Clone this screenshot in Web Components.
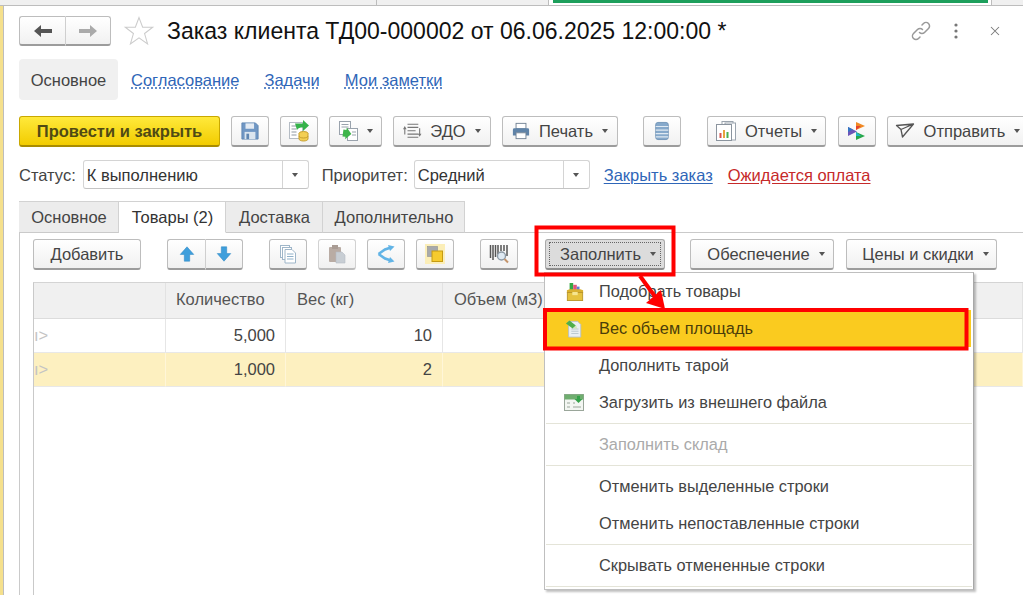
<!doctype html>
<html lang="ru">
<head>
<meta charset="utf-8">
<title>Заказ клиента</title>
<style>
	html, body { margin: 0; height: 100%; overflow: hidden; background: #fff; }
	body { font: 16.5px "Liberation Sans", Arial, sans-serif; color: #444; }
</style>
</head>
<body>
<order-window></order-window>
<script>
const ICONS = {
	back: '<path d="M1 10l7-6v4h11v4H8v4z" fill="#555"/>',
	forward: '<path d="M19 10l-7-6v4H1v4h11v4z" fill="#aaa"/>',
	star: '<path d="M14 1.5l3.4 9h9.4l-7.6 5.9 2.8 9.6-8-5.6-8 5.6 2.8-9.6-7.6-5.9h9.4z" fill="#fff" stroke="#ccc" stroke-width="1"/>',
	link: '<g fill="none" stroke="#999" stroke-width="1.5" stroke-linecap="round"><path d="M8.5 11.5a3.5 3.5 0 0 0 5 0l4-4a3.5 3.5 0 0 0-5-5l-1.500 1.500"/><path d="M11.500 8.500a3.500 3.500 0 0 0-5 0l-4 4a3.500 3.500 0 0 0 5 5l1.500-1.500"/></g>',
	kebab: '<g fill="#777"><circle cx="10" cy="4" r="1.600"/><circle cx="10" cy="10" r="1.600"/><circle cx="10" cy="16" r="1.600"/></g>',
	close: '<path d="M5 5l10 10M15 5L5 15" stroke="#777" stroke-width="1.300"/>',
	save: '<path d="M1 1h15l3 3v15H1z" fill="#7097c4" stroke="#5f86b2"/><rect x="5" y="1.500" width="9.500" height="6" fill="#e4ebf3"/><rect x="4" y="11" width="12" height="8" fill="#dbe5ef"/><rect x="6" y="13" width="3" height="6" fill="#5f86b2"/>',
	post: '<rect x=".5" y="1.500" width="13" height="16" fill="#fff" stroke="#b5bcc4"/><path d="M2.500 5h5M2.500 8h5M2.500 11h5M2.500 14h5" stroke="#8f99a3"/><path d="M6 2.500h8V-1l6 5.500-6 5.500V6.500c-3 0-5 .5-6 2.500z" fill="#35b24a"/><ellipse cx="14.500" cy="12.500" rx="4.500" ry="2" fill="#f3cf55" stroke="#c79f2e"/><path d="M10 12.500V18c0 1.100 2 2 4.500 2s4.500-.9 4.500-2v-5.500" fill="#f3cf55" stroke="#c79f2e"/><path d="M10 15c0 1.100 2 2 4.500 2s4.500-.9 4.500-2" fill="none" stroke="#c79f2e"/>',
	related: '<rect x="1.500" y=".5" width="11" height="13" fill="#fff" stroke="#9aa3ad"/><path d="M3.500 3.500h7M3.500 6h7" stroke="#9aa3ad"/><rect x="9.500" y="7.500" width="10" height="12" fill="#fff" stroke="#9aa3ad"/><path d="M14 11h4M14 14h4" stroke="#9aa3ad"/><path d="M5 9h3V6.500l5.500 6-5.500 6V16H5z" fill="#3fb54a" transform="rotate(8 9 12)"/>',
	edo: '<g fill="none" stroke="#777" stroke-width="1.200"><path d="M5 2.500h12M5 6h12M5 13.500h12M5 17h12M5 9.800h9"/><path d="M2 7v7M18.500 7v7"/></g><path d="M2 4.500L0 8h4zM18.500 16.500L16.500 13h4z" fill="#777"/>',
	print: '<rect x="4.500" y="1.500" width="11" height="6" fill="#fff" stroke="#6f7f91"/><path d="M1 8.500a1.500 1.500 0 0 1 1.500-1.500h15a1.500 1.500 0 0 1 1.500 1.500V15h-3.500v-3h-11v3H1z" fill="#5f83a8"/><rect x="4.500" y="12" width="11" height="6.500" fill="#fff" stroke="#6f7f91"/>',
	stack: '<rect x="3" y=".5" width="14" height="19" rx="2.500" fill="#86a9cb" stroke="#6f93b6"/><path d="M3 5h14M3 9h14M3 13h14M3 16.500h14" stroke="#dfe9f2" stroke-width="1.300"/>',
	reports: '<rect x="6" y=".5" width="11" height="16" fill="#fff" stroke="#9aa3ad"/><rect x="9" y="2" width="10.500" height="17" fill="#fff" stroke="#9aa3ad"/><rect x=".5" y="3.500" width="15" height="16" fill="#fff" stroke="#8b949e"/><rect x="3.500" y="12" width="2" height="5" fill="#d9534f"/><rect x="7" y="9" width="2" height="8" fill="#e8a33d"/><rect x="10.500" y="11" width="2" height="6" fill="#4caf50"/>',
	bitrix: '<path d="M9 1l9 4-9 4z" fill="#f08a24"/><path d="M9 5h5l-5 4z" fill="#e5412d"/><path d="M1 6l9 4.500-9 4.500z" fill="#6c56b8"/><path d="M1 6l5 2.500-5 2.500z" fill="#3276c3"/><path d="M9 11l9 4-9 4z" fill="#27a84a"/><path d="M9 11l5 4H9z" fill="#1fb5c9"/>',
	send: '<path d="M1.500 4.500l17-1.500-11 13-1.500-7.500zM6 8.500l12.500-5.500" fill="none" stroke="#555" stroke-width="1.300" stroke-linejoin="round"/>',
	up: '<path d="M10 2l7.500 8.500H13V18H7v-7.500H2.500z" fill="#3f9fdc" stroke="#2f88c4" stroke-width=".6"/>',
	down: '<path d="M10 18l7.500-8.500H13V2H7v7.500H2.500z" fill="#3f9fdc" stroke="#2f88c4" stroke-width=".6"/>',
	copy: '<g fill="#fff" stroke="#9fb6c9"><rect x="2.500" y="1.500" width="9" height="12"/><rect x="4.500" y="3.500" width="9" height="12"/><path d="M7 5.500h7l3.500 3.500v10H7z"/></g><path d="M9 10h6.500M9 12.500h6.500M9 15h6.500" stroke="#8fb0c9"/>',
	paste: '<rect x="2" y="3" width="12" height="15" rx="1" fill="#b9aca4"/><rect x="5" y="1" width="6" height="4" fill="#a99c94"/><path d="M9 8h6l3 3v8H9z" fill="#c8ced4" stroke="#b5bcc4" stroke-width=".6"/>',
	merge: '<path d="M2.500 10L9 5.500l6-2M2.500 10L9 14.500l6 2" fill="none" stroke="#62b4e6" stroke-width="2.600"/><path d="M12 1l6.500 1.500-4.500 4.500zM12 19l6.500-1.500L14 13z" fill="#62b4e6"/>',
	layers: '<rect width="20" height="20" fill="#fbeeb8"/><rect x="2.500" y="2.500" width="10" height="10" fill="#a7a9ac" stroke="#8e9093" stroke-width=".6"/><rect x="7" y="7" width="10.500" height="10.500" fill="#f6cb2e" stroke="#c59b12"/>',
	barcode: '<path d="M1.500 1v13M4 1v15M6.500 1v12M9 1v9M12 1v6M15 1v6M18 1v11" stroke="#555" stroke-width="1.500"/><circle cx="12.500" cy="12" r="4" fill="#dfeaf3" stroke="#8c9aa6" stroke-width="1.400"/><path d="M15.500 15l3.500 3.500" stroke="#c4946b" stroke-width="2"/>',
	pick: '<path d="M4 0h4v8H4z" fill="#35a845"/><path d="M8 2h4v7H8z" fill="#e2557b"/><path d="M12 4h3v6h-3z" fill="#5b7fd0"/><path d="M1 8l3-1h12l3 1v3H1z" fill="#d9b030"/><rect x="1.500" y="10.500" width="17" height="9" fill="#e6c23e" stroke="#b8952a"/><rect x="7" y="10" width="6" height="3.500" fill="#f6e58f"/>',
	weight: '<path d="M4 1.500h10l3.500 3.500v14H4z" fill="#e9eff3" stroke="#b5bfc7"/><path d="M7 10h8M7 12.500h8M7 15h8" stroke="#b7c5cf"/><path d="M1 4l4-3.500 7 5.500-3.500 3.500z" fill="#4fae4a"/><path d="M9 9l3.500-3 1 4z" fill="#cfe6b8"/>',
	load: '<rect x=".5" y="1.500" width="19" height="16" fill="#f3f6f2" stroke="#9aa69a"/><rect x=".5" y="1.500" width="19" height="5" fill="#6fae6f"/><path d="M3 10h3M3 14h3M9 14h8M9 10h2" stroke="#9aa69a"/><path d="M13 3h3v3h2.500l-4 4-4-4H13z" fill="#35a24a"/>'
};

class UiIcon extends HTMLElement {
	connectedCallback() {
		const size = this.getAttribute('size') || 20;
		const box = this.getAttribute('box') || 20;
		this.attachShadow({ mode: 'open' });
		this.shadowRoot.innerHTML = `
			<style>
				:host { display: inline-flex; flex: none; }
				svg { display: block; overflow: visible; }
			</style>
			<svg width="${size}" height="${size}" viewBox="0 0 ${box} ${box}">${ICONS[this.getAttribute('name')] || ''}</svg>
		`;
	}
}

class UiButton extends HTMLElement {
	constructor() {
		super();
		this.attachShadow({ mode: 'open' });
		this.shadowRoot.innerHTML = `
			<style>
				:host {
					display: inline-flex;
					flex: none;
					box-sizing: border-box;
					height: 31px;
					align-items: center;
					justify-content: center;
					gap: 9px;
					position: relative;
					background: linear-gradient(#ffffff, #f1f1f1);
					border: 1px solid #bdbdbd;
					border-bottom: 2px solid #9c9c9c;
					border-radius: 3px;
					color: #444;
					white-space: nowrap;
				}
				:host([primary]) {
					background: linear-gradient(#ffe93b, #f2cc00);
					border-color: #c9a800;
					border-bottom-color: #a98c00;
					color: #504a14;
					font-weight: bold;
				}
				:host([pressed]) {
					background: #dcdcdc;
					border-color: #a9a9a9;
					border-bottom-color: #8d8d8d;
				}
				:host([pressed])::after {
					content: "";
					position: absolute;
					inset: 2px 3px 2px 3px;
					border: 1px dotted #666;
				}
				:host([disabled]) { border-color: #d2d2d2; border-bottom-color: #bcbcbc; }
				:host([joined="left"]) { border-radius: 3px 0 0 3px; border-right-color: #cfcfcf; }
				:host([joined="right"]) { border-radius: 0 3px 3px 0; border-left: 0; }
				.caret {
					display: none;
					width: 0;
					height: 0;
					border: 3.5px solid transparent;
					border-top: 4px solid #555;
					border-bottom: 0;
				}
				:host([caret]) .caret { display: block; }
			</style>
			<slot></slot>
			<span class="caret"></span>
		`;
	}
}

class UiLink extends HTMLElement {
	constructor() {
		super();
		this.attachShadow({ mode: 'open' });
		this.shadowRoot.innerHTML = `
			<style>
				:host { display: inline-block; color: #2f66b8; text-decoration: underline; text-underline-offset: 2px; white-space: nowrap; }
				:host([dotted]) { text-decoration-style: dotted; }
				:host([danger]) { color: #c62a2a; }
			</style>
			<slot></slot>
		`;
	}
}

class UiCombo extends HTMLElement {
	constructor() {
		super();
		this.attachShadow({ mode: 'open' });
		this.shadowRoot.innerHTML = `
			<style>
				:host {
					display: inline-flex;
					flex: none;
					box-sizing: border-box;
					height: 29px;
					background: #fff;
					border: 1px solid #d4d4d4;
					border-bottom-color: #c4c4c4;
					border-radius: 3px;
					color: #333;
				}
				.value { flex: 1; padding-left: 3px; line-height: 29px; white-space: nowrap; overflow: hidden; }
				.arrow { flex: none; width: 25px; border-left: 1px solid #d4d4d4; display: grid; place-items: center; }
				.arrow i { width: 0; height: 0; border: 3.5px solid transparent; border-top: 4px solid #555; border-bottom: 0; }
			</style>
			<div class="value"><slot></slot></div>
			<div class="arrow"><i></i></div>
		`;
	}
}

class TabStrip extends HTMLElement {
	connectedCallback() {
		const active = Number(this.getAttribute('active') || 0);
		const labels = this.getAttribute('labels').split('|');
		const widths = this.getAttribute('widths').split('|');
		this.attachShadow({ mode: 'open' });
		this.shadowRoot.innerHTML = `
			<style>
				:host { display: flex; height: 31px; position: relative; z-index: 1; }
				div {
					box-sizing: border-box;
					height: 32px;
					padding-left: 1px;
					line-height: 30px;
					text-align: center;
					background: #ececec;
					border: 1px solid #d2d2d2;
					border-left: 0;
					border-bottom-color: #cacaca;
					white-space: nowrap;
				}
				div:first-child { border-left: 1px solid #d2d2d2; }
				.on { background: #fff; border-bottom-color: #fff; color: #333; }
			</style>
			${labels.map((label, i) => `<div class="${i === active ? 'on' : ''}" style="width:${widths[i]}px">${label}</div>`).join('')}
		`;
	}
}

class DataTable extends HTMLElement {
	constructor() {
		super();
		this.attachShadow({ mode: 'open' });
		this.shadowRoot.innerHTML = `
			<style>
				:host {
					display: block;
					border-left: 1px solid #c9c9c9;
					border-top: 1px solid #d4d4d4;
					background: #fff;
					height: 313px;
				}
				.row { display: grid; grid-template-columns: 132px 120px 157px 1fr; }
				.row > div { box-sizing: border-box; border-right: 1px solid #e6e6e6; overflow: hidden; white-space: nowrap; }
				.head > div { height: 36px; line-height: 33px; background: #f0f0f0; border-right-color: #e2e2e2; border-bottom: 1px solid #dcdcdc; padding-left: 10px; color: #555; }
				.head > div:nth-child(n+3) { padding-left: 11px; }
				.body > div { height: 34px; line-height: 32px; border-bottom: 1px solid #e8e8e8; padding-right: 10px; text-align: right; color: #444; }
				.body > div:first-child { text-align: left; padding: 0; color: #c4c4c4; }
				.sel > div { background: #fdf0c0; border-right-color: #fff6d8; }
			</style>
			<div class="row head"><div></div><div>Количество</div><div>Вес (кг)</div><div>Объем (м3)</div></div>
			<div class="row body"><div>ı&gt;</div><div>5,000</div><div>10</div><div></div></div>
			<div class="row body sel"><div>ı&gt;</div><div>1,000</div><div>2</div><div></div></div>
		`;
	}
}

class PopupMenu extends HTMLElement {
	constructor() {
		super();
		this.attachShadow({ mode: 'open' });
		this.shadowRoot.innerHTML = `
			<style>
				:host {
					display: block;
					position: absolute;
					z-index: 5;
					left: 544px;
					top: 272px;
					width: 430px;
					box-sizing: border-box;
					background: #fff;
					border: 1px solid #bfbfbf;
					border-right-color: #a8a8a8;
					box-shadow: 2px 2px 2px rgba(0, 0, 0, .25);
					font-size: 16.350px;
				}
			</style>
			<slot></slot>
		`;
	}
}

class MenuItem extends HTMLElement {
	constructor() {
		super();
		this.attachShadow({ mode: 'open' });
		this.shadowRoot.innerHTML = `
			<style>
				:host { display: flex; align-items: center; height: 37px; color: #444; white-space: nowrap; }
				:host([active]) { background: #facb1f; margin-right: 2px; color: #4a3d0a; }
				:host([disabled]) { color: #aaa; }
				.icon { flex: none; width: 54px; display: flex; padding-left: 19px; box-sizing: border-box; }
			</style>
			<div class="icon"><slot name="icon"></slot></div>
			<slot></slot>
		`;
	}
}

class MenuSeparator extends HTMLElement {
	constructor() {
		super();
		this.attachShadow({ mode: 'open' });
		this.shadowRoot.innerHTML = `
			<style>
				:host { display: block; height: 1px; margin: 2px 1px; background: #e4e4d8; }
			</style>
		`;
	}
}

class CalloutLayer extends HTMLElement {
	constructor() {
		super();
		this.attachShadow({ mode: 'open' });
		this.shadowRoot.innerHTML = `
			<style>
				:host { position: absolute; inset: 0; z-index: 10; pointer-events: none; }
				svg { display: block; }
			</style>
			<svg width="1023" height="595">
				<rect x="536.500" y="227.500" width="137" height="47" fill="none" stroke="#f00" stroke-width="4"/>
				<rect x="545" y="310" width="421.500" height="38.500" fill="none" stroke="#f00" stroke-width="4"/>
				<path d="M640 276l19 26" stroke="#f00" stroke-width="4"/>
				<path d="M665 309l-19-6 15-13z" fill="#f00"/>
			</svg>
		`;
	}
}

class OrderWindow extends HTMLElement {
	constructor() {
		super();
		this.attachShadow({ mode: 'open' });
		this.shadowRoot.innerHTML = `
			<style>
				:host { display: block; position: relative; width: 1023px; height: 595px; overflow: hidden; }
				.top { display: flex; height: 6px; box-sizing: border-box; background: #f0f0f0; border-bottom: 1px solid #bdbdbd; }
				.top div { border-right: 1px solid #bdbdbd; }
				.top .current { box-sizing: border-box; background: #fff; padding: 0 3px 0 4px; }
				.top .current i { display: block; height: 3px; background: #1d9f5c; }
				.frame { display: flex; height: 589px; }
				.rail { flex: none; width: 3px; background: #f5e08c; border-right: 1px solid #bdbdbd; }
				.content { flex: 1; min-width: 0; }
				.title-row { display: flex; align-items: center; height: 30px; margin: 10px 0 0 15px; }
				.title { margin-left: 13px; font-size: 23.030px; color: #111; white-space: nowrap; }
				.sections { display: flex; align-items: center; height: 41px; margin: 13px 0 0 15px; }
				.sections .on { width: 99px; height: 41px; line-height: 42px; text-align: center; background: #f0f0f0; border-radius: 4px; color: #444; }
				.sections ui-link { margin-top: 2px; }
				.bar { display: flex; align-items: center; }
				.cmd { height: 31px; margin: 16px 0 0 15px; }
				.status { height: 29px; margin: 13px 0 0 15px; }
				.status span, .status ui-link { margin-top: 2px; }
				.tabs { margin: 12px 0 0 15px; }
				.panel { margin-left: 15px; border-left: 1px solid #cacaca; border-top: 1px solid #cacaca; padding: 6px 0 0 13px; }
				.tools { height: 31px; }
				data-table { margin-top: 12px; }
				.group { display: flex; flex: none; }
			</style>
			<div class="top">
				<div style="width:376px"></div>
				<div style="width:171px"></div>
				<div class="current" style="width:443px"><i></i></div>
			</div>
			<div class="frame">
				<div class="rail"></div>
				<div class="content">
					<div class="title-row">
						<div class="group">
							<ui-button joined="left" style="width:47px;height:30px"><ui-icon name="back"></ui-icon></ui-button>
							<ui-button joined="right" style="width:45px;height:30px"><ui-icon name="forward"></ui-icon></ui-button>
						</div>
						<ui-icon name="star" size="30" box="28" style="margin-left:13px"></ui-icon>
						<span class="title">Заказ клиента ТД00-000002 от 06.06.2025 12:00:00 *</span>
						<ui-icon name="link" style="margin-left:185px"></ui-icon>
						<ui-icon name="kebab" style="margin-left:15px"></ui-icon>
						<ui-icon name="close" size="16" style="margin-left:21px"></ui-icon>
					</div>
					<div class="sections">
						<div class="on">Основное</div>
						<ui-link dotted style="margin-left:13px">Согласование</ui-link>
						<ui-link dotted style="margin-left:25px">Задачи</ui-link>
						<ui-link dotted style="margin-left:25px">Мои заметки</ui-link>
					</div>
					<div class="bar cmd">
						<ui-button primary style="width:201px">Провести и закрыть</ui-button>
						<ui-button style="width:38px;margin-left:11px"><ui-icon name="save" size="18"></ui-icon></ui-button>
						<ui-button style="width:38px;margin-left:11px"><ui-icon name="post"></ui-icon></ui-button>
						<ui-button caret style="width:53px;margin-left:11px"><ui-icon name="related"></ui-icon></ui-button>
						<ui-button caret style="width:98px;margin-left:11px"><ui-icon name="edo" size="18"></ui-icon>ЭДО</ui-button>
						<ui-button caret style="width:116px;margin-left:11px"><ui-icon name="print" size="18"></ui-icon>Печать</ui-button>
						<ui-button style="width:38px;margin-left:25px"><ui-icon name="stack" size="18"></ui-icon></ui-button>
						<ui-button caret style="width:119px;margin-left:26px"><ui-icon name="reports"></ui-icon>Отчеты</ui-button>
						<ui-button style="width:38px;margin-left:12px"><ui-icon name="bitrix" size="20"></ui-icon></ui-button>
						<ui-button caret style="width:141px;margin-left:11px"><ui-icon name="send"></ui-icon>Отправить</ui-button>
					</div>
					<div class="bar status">
						<span>Статус:</span>
						<ui-combo style="width:226px;margin-left:7px">К выполнению</ui-combo>
						<span style="margin-left:13px">Приоритет:</span>
						<ui-combo style="width:176px;margin-left:6px">Средний</ui-combo>
						<ui-link style="margin-left:14px">Закрыть заказ</ui-link>
						<ui-link danger style="margin-left:15px">Ожидается оплата</ui-link>
					</div>
					<tab-strip class="tabs" labels="Основное|Товары (2)|Доставка|Дополнительно" widths="100|107|97|142" active="1"></tab-strip>
					<div class="panel">
						<div class="bar tools">
							<ui-button style="width:108px">Добавить</ui-button>
							<div class="group" style="margin-left:26px">
								<ui-button joined="left" style="width:39px"><ui-icon name="up" size="18"></ui-icon></ui-button>
								<ui-button joined="right" style="width:37px"><ui-icon name="down" size="18"></ui-icon></ui-button>
							</div>
							<ui-button style="width:38px;margin-left:26px"><ui-icon name="copy"></ui-icon></ui-button>
							<ui-button disabled style="width:38px;margin-left:11px"><ui-icon name="paste"></ui-icon></ui-button>
							<ui-button style="width:38px;margin-left:11px"><ui-icon name="merge"></ui-icon></ui-button>
							<ui-button style="width:38px;margin-left:11px"><ui-icon name="layers"></ui-icon></ui-button>
							<ui-button style="width:38px;margin-left:26px"><ui-icon name="barcode"></ui-icon></ui-button>
							<ui-button pressed caret style="width:120px;margin-left:27px;padding-left:6px">Заполнить</ui-button>
							<ui-button caret style="width:144px;margin-left:25px;padding-left:8px">Обеспечение</ui-button>
							<ui-button caret style="width:151px;margin-left:12px;padding-left:8px">Цены и скидки</ui-button>
						</div>
						<data-table></data-table>
					</div>
				</div>
			</div>
			<popup-menu>
				<menu-item><ui-icon slot="icon" name="pick" size="18" style="margin-left:2px"></ui-icon>Подобрать товары</menu-item>
				<menu-item active><ui-icon slot="icon" name="weight" size="18" style="margin-left:1px"></ui-icon>Вес объем площадь</menu-item>
				<menu-item>Дополнить тарой</menu-item>
				<menu-item><ui-icon slot="icon" name="load"></ui-icon>Загрузить из внешнего файла</menu-item>
				<menu-separator></menu-separator>
				<menu-item disabled>Заполнить склад</menu-item>
				<menu-separator></menu-separator>
				<menu-item>Отменить выделенные строки</menu-item>
				<menu-item>Отменить непоставленные строки</menu-item>
				<menu-separator></menu-separator>
				<menu-item>Скрывать отмененные строки</menu-item>
				<menu-separator></menu-separator>
			</popup-menu>
			<callout-layer></callout-layer>
		`;
	}
}

customElements.define('ui-icon', UiIcon);
customElements.define('ui-button', UiButton);
customElements.define('ui-link', UiLink);
customElements.define('ui-combo', UiCombo);
customElements.define('tab-strip', TabStrip);
customElements.define('data-table', DataTable);
customElements.define('popup-menu', PopupMenu);
customElements.define('menu-item', MenuItem);
customElements.define('menu-separator', MenuSeparator);
customElements.define('callout-layer', CalloutLayer);
customElements.define('order-window', OrderWindow);
</script>
</body>
</html>
